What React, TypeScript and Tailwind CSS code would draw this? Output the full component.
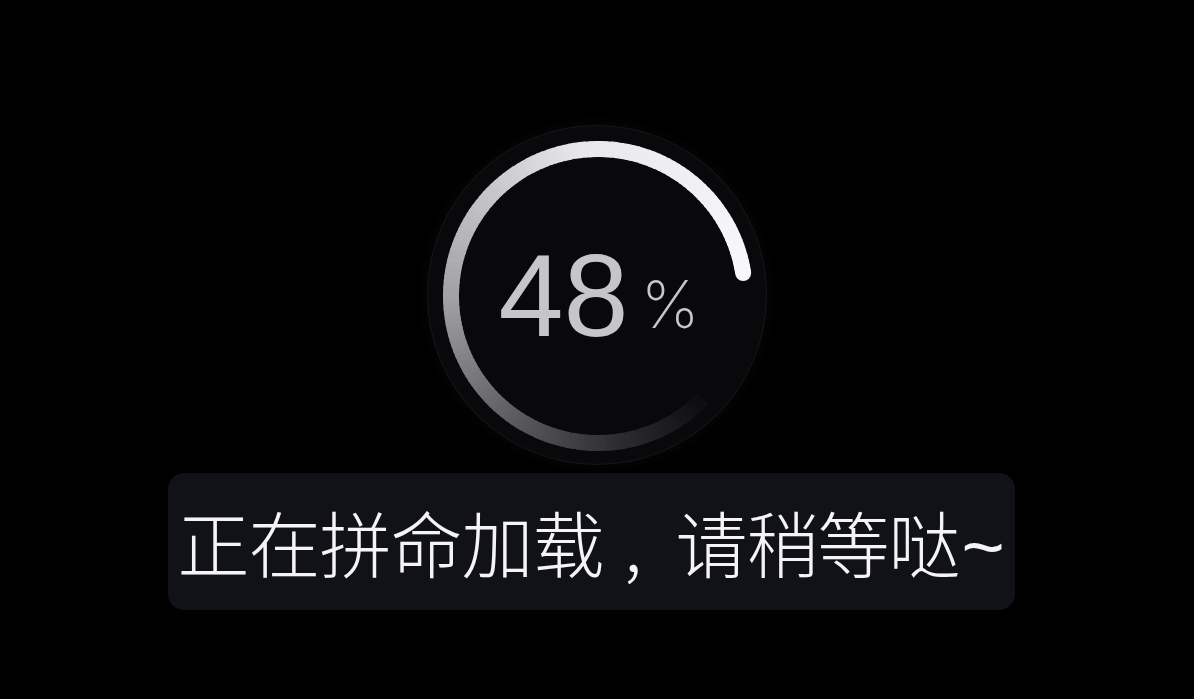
const SIZE = 340;
const C = SIZE / 2;
const R = 147;
const STROKE = 16;

// progress head sits at 81deg (clockwise from 12 o'clock); the tail fades
// out counter-clockwise all the way round to the lower right
const HEAD = 81;
const TAIL = -225;
const STEPS = 150;

const polar = (deg: number) => {
  const rad = ((deg - 90) * Math.PI) / 180;
  return [C + R * Math.cos(rad), C + R * Math.sin(rad)];
};

// brightness along the tail, t = 0 at head, 1 at the faded end
const shade = (t: number) => {
  const stops: [number, number][] = [
    [0, 248],
    [0.28, 232],
    [0.56, 160],
    [0.74, 90],
    [0.87, 46],
    [1, 12],
  ];
  for (let i = 1; i < stops.length; i++) {
    const [t1, v1] = stops[i];
    const [t0, v0] = stops[i - 1];
    if (t <= t1) {
      const k = (t - t0) / (t1 - t0);
      return Math.round(v0 + (v1 - v0) * k);
    }
  }
  return 12;
};

const segments = Array.from({ length: STEPS }, (_, i) => {
  const a0 = HEAD - ((HEAD - TAIL) * i) / STEPS;
  const a1 = HEAD - ((HEAD - TAIL) * (i + 1)) / STEPS - 0.6;
  const [x0, y0] = polar(a1);
  const [x1, y1] = polar(a0);
  const v = shade(i / STEPS);
  return {
    d: `M ${x0} ${y0} A ${R} ${R} 0 0 1 ${x1} ${y1}`,
    color: `rgb(${v},${v},${v + 3})`,
  };
});

function ProgressRing() {
  const [hx, hy] = polar(HEAD);
  return (
    <svg width={SIZE} height={SIZE} className="absolute inset-0">
      {segments
        .slice()
        .reverse()
        .map((s, i) => (
          <path key={i} d={s.d} stroke={s.color} strokeWidth={STROKE} fill="none" />
        ))}
      <circle cx={hx} cy={hy} r={STROKE / 2} fill="rgb(248,248,251)" />
    </svg>
  );
}

export default function App() {
  return (
    <div
      className="flex h-[699px] w-full flex-col items-center bg-black pt-[125px]"
      style={{ fontFamily: '"Liberation Sans", Arial, sans-serif' }}
    >
      <div className="relative h-[340px] w-[340px] rounded-full border border-white/[0.05] bg-[#09090c] shadow-[0_0_16px_rgba(255,255,255,0.035)]">
        <ProgressRing />
        <div className="absolute inset-0 flex items-center justify-center pl-[4px]">
          <span className="text-[117px] leading-none text-[#c6c6ca]">48</span>
          <span className="ml-[12px] mt-[18px] font-['Inter'] text-[66px] font-extralight leading-none text-[#c6c6ca]">
            %
          </span>
        </div>
      </div>

      <div className="mt-[8px] flex h-[137px] w-[847px] -translate-x-[6px] items-center rounded-[16px] bg-[#111217] pl-[10px] pt-[5px]">
        <span
          className="text-[72px] font-light leading-none tracking-[-1px] text-[#f4f4f6]"
          style={{ fontFamily: '"Noto Sans CJK SC", "Noto Sans", sans-serif' }}
        >
          正在拼命加载
          <span className="inline-block w-[72px] pr-[14px] text-center">,</span>
          请稍等哒
          <span className="ml-[2px] font-['Liberation_Sans'] text-[74px] font-normal">~</span>
        </span>
      </div>
    </div>
  );
}
